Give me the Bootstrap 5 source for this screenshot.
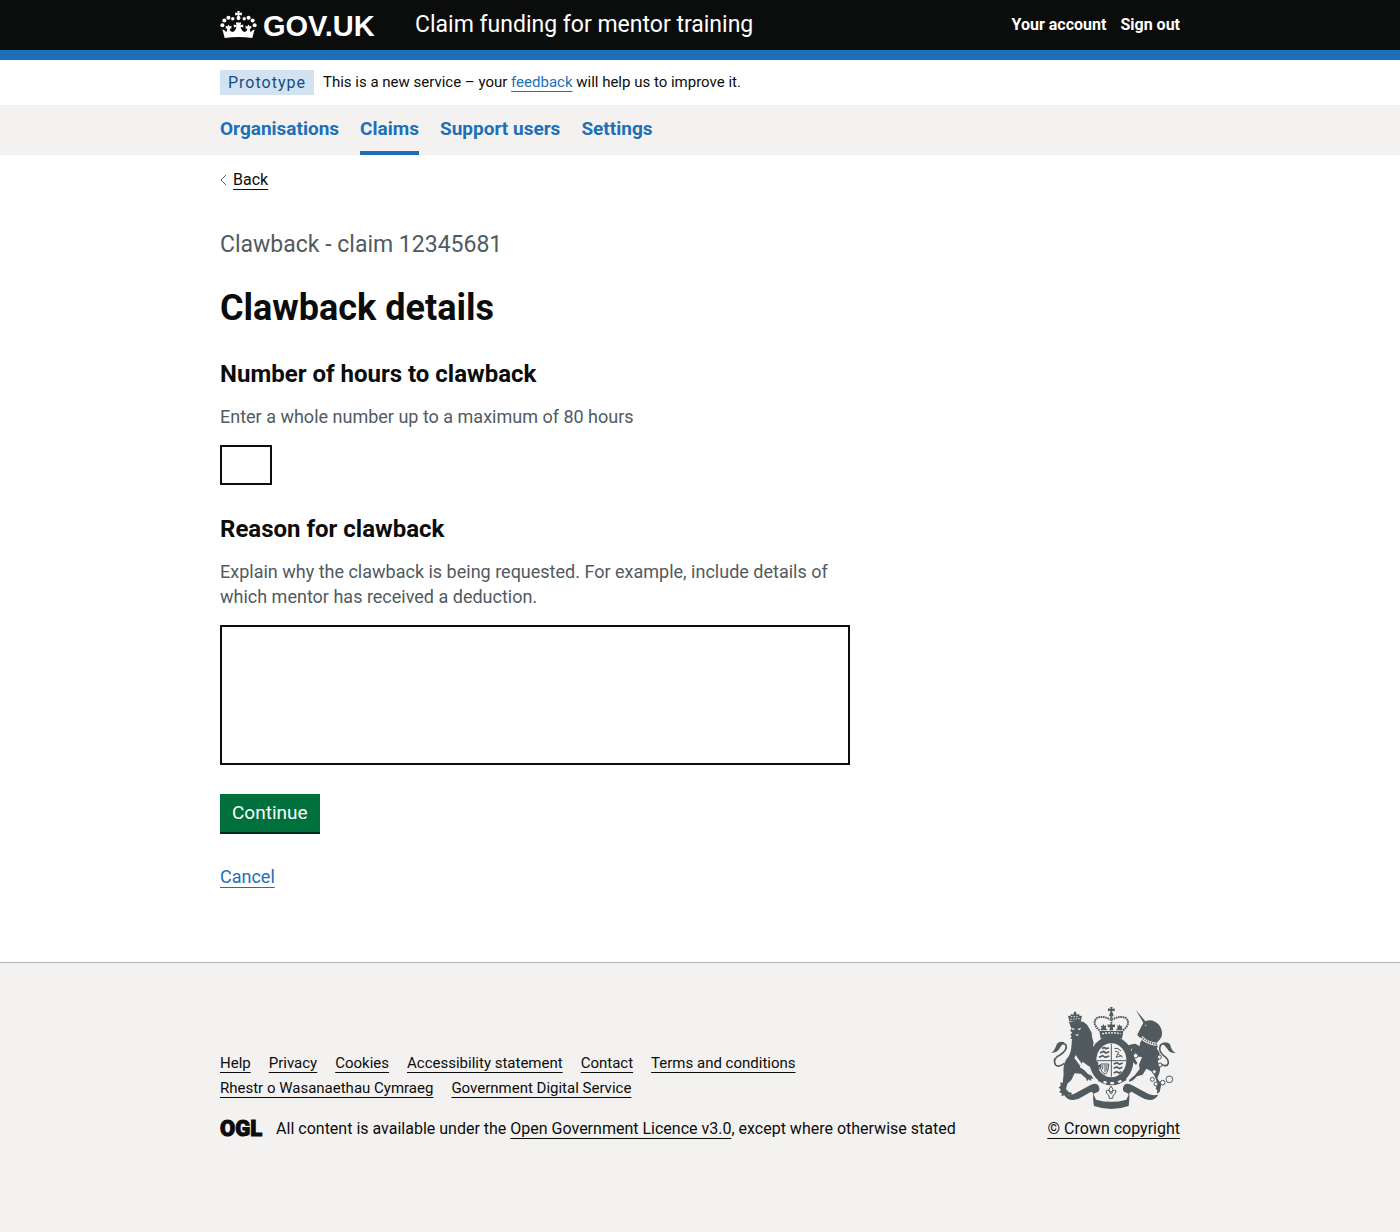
<!DOCTYPE html>
<html lang="en">
<head>
<meta charset="utf-8">
<meta name="viewport" content="width=device-width, initial-scale=1">
<title>Clawback details - Claim funding for mentor training - GOV.UK</title>
<link rel="stylesheet" href="https://cdn.jsdelivr.net/npm/bootstrap@5.3.0/dist/css/bootstrap.min.css">
<style>
:root { --ink: #0b0c0c; --blue: #1d70b8; --muted: #505a5f; --panel: #f3f2f1; }
body { font-family: Roboto, "Liberation Sans", sans-serif; font-size: 18px; line-height: 25px; color: var(--ink); background: var(--panel); }
a { text-decoration-thickness: 1px; text-underline-offset: 4px; }
.page-width { max-width: 960px; margin: 0 auto; }
.ink-link { color: var(--ink); }
.blue-link { color: var(--blue); }
.top-bar { background: var(--ink); border-bottom: 10px solid var(--blue); }
.top-inner { min-height: 50px; }
.brand-col { width: 195px; gap: 6px; }
.brand-col svg { margin-bottom: 2px; }
.wordmark { font: 700 29px/40px "Liberation Sans", sans-serif; padding-top: 2px; }
.service-name { font-size: 23px; line-height: 30px; }
.account-links { gap: 14px; font-size: 16px; line-height: 20px; }
.phase-row { gap: 9px; padding: 10px 0; font-size: 15px; }
.phase-tag { background: #d2e2f1; color: #144e81; font-size: 16px; line-height: 25px; padding: 0 8px; letter-spacing: 1px; }
.section-nav { background: var(--panel); }
.section-nav .nav { gap: 21px; font-size: 19px; }
.section-nav .nav-link { color: var(--blue); padding: 11px 0 10px; border-bottom: 4px solid transparent; }
.section-nav .nav-link.active { border-color: var(--blue); }
.back-row { padding: 15px 0 0; gap: 6px; font-size: 16px; line-height: 20px; }
.body-area { padding: 40px 0 73px; }
.form-col { max-width: 630px; }
.muted { color: var(--muted); }
.caption-l { font-size: 23px; line-height: 30px; margin-bottom: 28px; }
.title-l { font-size: 36px; line-height: 40px; margin-bottom: 31px; }
.title-m { font-size: 24px; line-height: 30px; font-weight: 700; margin-bottom: 15px; }
.field-hint { margin-bottom: 16px; }
.field-block { margin-bottom: 29px; }
.field-block .form-control { border: 2px solid var(--ink); border-radius: 0; }
.field-block .hours-box { width: 52px; height: 40px; }
.field-block .reason-box { height: 140px; resize: none; }
.go-btn { --bs-btn-bg: #00703c; --bs-btn-color: #fff; --bs-btn-hover-bg: #005a30; --bs-btn-hover-color: #fff; --bs-btn-border-width: 0; --bs-btn-border-radius: 0; --bs-btn-font-size: 19px; --bs-btn-line-height: 24px; --bs-btn-padding-x: 12px; --bs-btn-padding-y: 7px; box-shadow: 0 2px 0 #002d18; margin-bottom: 32px; }
.foot { border-top: 1px solid #b1b4b6; padding: 44px 0 93px; font-size: 15px; }
.foot-row { gap: 40px; }
.foot-links { column-gap: 18px; margin-bottom: 18px; line-height: 25px; }
.licence-row { gap: 14px; font-size: 16px; line-height: 20px; }
.ogl-mark { font: 900 22px/20px Roboto, sans-serif; -webkit-text-stroke: 1px var(--ink); }
.crest-link { gap: 10px; font-size: 16px; line-height: 20px; color: var(--ink); }
</style>
<script src="https://cdn.jsdelivr.net/npm/bootstrap@5.3.0/dist/js/bootstrap.bundle.min.js"></script>
</head>
<body>
<header class="top-bar text-white">
  <div class="page-width top-inner d-flex align-items-center">
    <a href="#" class="brand-col d-flex align-items-center text-white text-decoration-none" aria-label="GOV.UK">
      <svg width="37" height="27" viewBox="29 32 110 80" fill="currentColor" aria-hidden="true">
        <path d="M43 112 36 86q8 3 12 9l3-10-5-1v-8l5 2 3-6 4 6 5-2v8l-5 1q0 9 8 9 8-1 10-9l2-6-8 2v-9l8 2-2-8h16l-2 8 8-2v9l-8-2 2 6q2 8 10 9 8 0 8-9l-5-1v-8l5 2 4-6 3 6 5-2v8l-5 1 3 10q4-6 12-9l-7 26q-41-6-82 0Z"/>
        <path d="M80 32h8l-2 6 8-2v9l-8-2 2 8h-8l2-8-8 2v-9l8 2Z"/>
        <circle cx="84" cy="53" r="6"/><circle cx="36" cy="74" r="6"/><circle cx="132" cy="74" r="6"/>
        <circle cx="42" cy="60" r="6"/><circle cx="126" cy="60" r="6"/><circle cx="54" cy="52" r="6"/><circle cx="114" cy="52" r="6"/>
        <circle cx="67" cy="55" r="5"/><circle cx="101" cy="55" r="5"/>
      </svg>
      <span class="wordmark">GOV.UK</span>
    </a>
    <a href="#" class="service-name text-white text-decoration-none">Claim funding for mentor training</a>
    <nav class="account-links d-flex ms-auto fw-bold" aria-label="Account">
      <a href="#" class="text-white text-decoration-none">Your account</a>
      <a href="#" class="text-white text-decoration-none">Sign out</a>
    </nav>
  </div>
</header>
<div class="bg-white">
  <div class="page-width phase-row d-flex align-items-center">
    <strong class="phase-tag fw-normal">Prototype</strong>
    <span>This is a new service – your <a href="#" class="blue-link">feedback</a> will help us to improve it.</span>
  </div>
  <nav class="section-nav" aria-label="Sections">
    <div class="page-width nav fw-bold">
      <a class="nav-link" href="#">Organisations</a>
      <a class="nav-link active" aria-current="page" href="#">Claims</a>
      <a class="nav-link" href="#">Support users</a>
      <a class="nav-link" href="#">Settings</a>
    </div>
  </nav>
  <div class="page-width back-row d-flex align-items-center">
    <svg width="7" height="12" viewBox="0 0 7 12" fill="none" stroke="#505a5f" aria-hidden="true"><path d="M6 1 1 6l5 5"/></svg>
    <a href="#" class="ink-link">Back</a>
  </div>
  <main class="page-width body-area">
    <form class="form-col">
      <p class="caption-l muted">Clawback - claim 12345681</p>
      <h1 class="title-l fw-bold">Clawback details</h1>
      <div class="field-block">
        <label class="title-m d-block" for="hours">Number of hours to clawback</label>
        <div id="hours-hint" class="field-hint muted">Enter a whole number up to a maximum of 80 hours</div>
        <input id="hours" class="form-control hours-box" type="text" inputmode="numeric" aria-describedby="hours-hint">
      </div>
      <div class="field-block">
        <label class="title-m d-block" for="reason">Reason for clawback</label>
        <div id="reason-hint" class="field-hint muted">Explain why the clawback is being requested. For example, include details of which mentor has received a deduction.</div>
        <textarea id="reason" class="form-control reason-box" aria-describedby="reason-hint"></textarea>
      </div>
      <button type="submit" class="btn go-btn d-block">Continue</button>
      <a href="#" class="blue-link">Cancel</a>
    </form>
  </main>
</div>
<footer class="foot">
  <div class="page-width foot-row d-flex justify-content-between align-items-end">
    <div>
      <ul class="foot-links list-unstyled d-flex flex-wrap">
        <li><a class="ink-link" href="#">Help</a></li>
        <li><a class="ink-link" href="#">Privacy</a></li>
        <li><a class="ink-link" href="#">Cookies</a></li>
        <li><a class="ink-link" href="#">Accessibility statement</a></li>
        <li><a class="ink-link" href="#">Contact</a></li>
        <li><a class="ink-link" href="#">Terms and conditions</a></li>
        <li><a class="ink-link" href="#">Rhestr o Wasanaethau Cymraeg</a></li>
        <li><a class="ink-link" href="#">Government Digital Service</a></li>
      </ul>
      <div class="licence-row d-flex align-items-center">
        <span class="ogl-mark">OGL</span>
        <span>All content is available under the <a class="ink-link" href="#">Open Government Licence v3.0</a>, except where otherwise stated</span>
      </div>
    </div>
    <a class="crest-link d-flex flex-column align-items-center flex-shrink-0" href="#">
      <svg width="125" height="102" viewBox="38 36 375 306" fill="#505a5f" aria-hidden="true">
        <!-- ribbon -->
        <path d="M77 299q18 4 31-3l50-27q22-9 25 11 1 11-11 13-5 2-6 6l7 15q46 13 91 0l7-15q-1-4-6-6-12-2-11-13 3-20 25-11l50 27q13 7 31 3-10 17-27 16-15-1-31-12l-22-13-7 4q1 19-2 39-51 18-104 0-4-20-2-39l-7-4-22 13q-16 11-31 12-18 1-28-16Z"/>
        <path d="M196 274h50v37q-25 5-50 0Z" fill="#f3f2f1"/>
        <path d="m218 273 6 10-4 8h-5l-3-8Zm-14 14q10-4 12 8h5q2-12 12-8 2 8-8 13l-2 10h-10l-2-10q-10-5-7-13Z" fill="none" stroke="#505a5f" stroke-width="3"/>
        <!-- garter and shield -->
        <ellipse cx="219" cy="197" rx="66" ry="74"/>
        <ellipse cx="219" cy="196" rx="45" ry="51" fill="#f3f2f1"/>
        <path d="M219 147v98M175 197h89" stroke="#505a5f" stroke-width="3"/>
        <g fill="none" stroke="#505a5f" stroke-width="5">
          <path d="M191 161q8-6 11 0l10-2M185 174l11-5 6 5 11-4M182 187l11-5 8 5 12-4M226 207l10-4 7 5 10-4M226 220l10-4 7 5 9-4M226 234l9-4 7 4 7-4"/>
          <path d="M228 160q12-2 20 8M230 168l11 4-8 15 17-5M240 178l13 8" stroke-width="3"/>
          <path d="M187 207v14q4 14 14 17 10-8 10-31Zm6 4v12m7-14v23m6-22-1 17" stroke-width="3"/>
        </g>
        <path d="m184 249 23 8 31 0 22-11 5 9-23 12-38 1-25-10Z"/>
        <path d="m196 257 10 3-3 7-8-3Zm20 4h11v7h-11Zm22-2 9-5 4 6-9 5Z" fill="#f3f2f1"/>
        <!-- crown -->
        <path d="m183 108 72 0-4 23q-32-10-64 0Z"/>
        <path d="M191 116q28-5 56 0" stroke="#f3f2f1" stroke-width="4" stroke-dasharray="6 3" fill="none"/>
        <path d="M184 106q-24-19-10-36 19-10 42 4M254 106q24-19 10-36-19-10-42 4M219 66v40" fill="none" stroke="#505a5f" stroke-width="6" stroke-dasharray="5 2"/>
        <path d="M215 36h8l-2 6 8-2v9l-8-2 3 10q5 7-5 9-10-2-5-9l3-10-8 2v-9l8 2ZM219 82l3 8 8-2v9l-7-1 2 10h-12l2-10-7 1v-9l8 2ZM195 86l3 7 6-2-2 8 6 7h-22l4-7-3-7 6 1ZM243 86l3 7 6-1-2 7 4 7h-22l6-7-2-8 6 2Z"/>
        <!-- lion -->
        <path d="M92 82q22-8 44-1 12 7 18 21 9 12 7 24l5 18-2 8 10 23 3 10-12-9-8 2 13 15 10 10-1 8 8-3 3 9-7-1 2 8-8-2-4 8-4-9-20-9-16-12-9 16q17 9 25 21l11 5 6 11-7-3-1 8-7-5-5 6-3-9-16-14-18-1-10 20-12 11-4 16 8 9 10 3-3 7-8-2-4 6-7-5-9 4 0-9-8-4 6-6-7-8 6-4-1-11 7 2 3-28q-3-24 8-43 13-13 15-36l2-25-6-2 5-5-4-7 6-4-7-8 5-3Z"/>
        <path d="m99 98 11 4-6 4Zm18 4 12-4-5 8Zm-9 15q8 5 14-2l-5 9ZM112 180l18 26-4 7-18-24Z" fill="#f3f2f1"/>
        <path d="m93 79-4-17 7 1 2-6 7 2 2-9 6 0 2 9 7-2 2 6 7-1-4 18q-17-4-34-1Z"/>
        <path d="m96 73 28-2M98 65l24 0" stroke="#f3f2f1" stroke-width="3" stroke-dasharray="4 4"/>
        <path d="M78 205q-22 16-28 2-7-17 15-27 23-15 18-30-9-10-23 4" fill="none" stroke="#505a5f" stroke-width="5"/>
        <path d="M79 142q-22-6-27 14-4 12-14 18 19-2 25-13l6-9Z"/>
        <!-- unicorn -->
        <path d="m292 44 31 37-7 4Z"/>
        <path d="M316 82q16-11 34-2 15 8 19 23 6 17-4 30l-12 13 5 7-2 9 7 10q4 17-5 28 11 12 6 31l-7 19 12 18-5 23-9 5 2-10-5-5 5-17-10-25-8-10-15-8-11 18-17 5-12 12-11 5-1-6 18-15 14-18-2-13 9-23-11-1-8-13-5 15 10 17-4 6-9-8-8-21 6-22-9 10-6-1 2-17 12-3 10-2 13 8 1-10 9-16-1-4-8 4-8-7 4-11Z"/>
        <path d="m319 89 6 1-3 3Z" fill="#f3f2f1"/>
        <path d="M309 127q17 17 46 21" fill="none" stroke="#f3f2f1" stroke-width="10"/>
        <path d="M308 126q18 17 47 22" fill="none" stroke="#505a5f" stroke-width="5" stroke-dasharray="4 3"/>
        <path d="M366 207q20 11 24-2 2-12-15-24-17-15-8-31 13-11 27 4" fill="none" stroke="#505a5f" stroke-width="5"/>
        <path d="M371 145q24-8 27 13 5 12 14 16-19 1-24-11l-8-10Z"/>
        <g fill="#f3f2f1" stroke="#505a5f" stroke-width="3">
          <circle cx="292" cy="182" r="7"/><circle cx="363" cy="186" r="6"/><circle cx="365" cy="210" r="6"/><circle cx="348" cy="230" r="6"/>
          <circle cx="342" cy="253" r="6"/><circle cx="353" cy="267" r="6"/><circle cx="373" cy="263" r="7"/><circle cx="393" cy="253" r="10"/>
        </g>
      </svg>
      <span class="text-decoration-underline">© Crown copyright</span>
    </a>
  </div>
</footer>
</body>
</html>
